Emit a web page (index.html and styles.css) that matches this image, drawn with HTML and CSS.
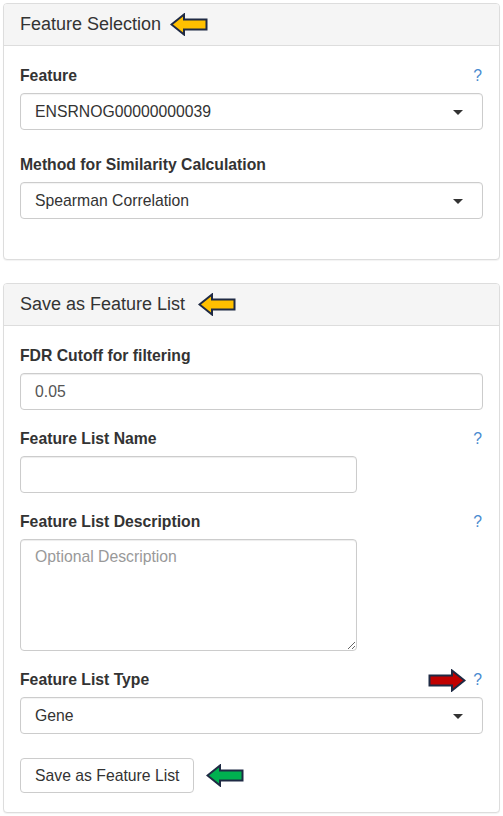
FILE: index.html
```html
<!DOCTYPE html>
<html lang="en">
<head>
<meta charset="utf-8">
<title>Feature Selection</title>
<link rel="stylesheet" href="styles.css">
</head>
<body>
  <section class="panel">
    <div class="panel-heading">
      <span class="panel-title">Feature Selection</span>
      <svg class="arrow arrow-head-1" width="38" height="23" viewBox="0 0 38 23"><polygon points="1.5,11.5 14,1.5 14,6.5 36.5,6.5 36.5,16.5 14,16.5 14,21.5" fill="#ffc000" stroke="#1f2a44" stroke-width="2" stroke-linejoin="miter"/></svg>
    </div>
    <div class="panel-body">
      <div class="form-group form-group-select">
        <div class="label-row">
          <label class="control-label">Feature</label>
          <span class="help">?</span>
        </div>
        <div class="select-box">
          <span class="select-value">ENSRNOG00000000039</span>
          <span class="caret"></span>
        </div>
      </div>
      <div class="form-group form-group-select">
        <div class="label-row">
          <label class="control-label">Method for Similarity Calculation</label>
        </div>
        <div class="select-box">
          <span class="select-value">Spearman Correlation</span>
          <span class="caret"></span>
        </div>
      </div>
    </div>
  </section>

  <section class="panel">
    <div class="panel-heading">
      <span class="panel-title">Save as Feature List</span>
      <svg class="arrow arrow-head-2" width="38" height="23" viewBox="0 0 38 23"><polygon points="1.5,11.5 14,1.5 14,6.5 36.5,6.5 36.5,16.5 14,16.5 14,21.5" fill="#ffc000" stroke="#1f2a44" stroke-width="2" stroke-linejoin="miter"/></svg>
    </div>
    <div class="panel-body">
      <div class="form-group">
        <div class="label-row">
          <label class="control-label">FDR Cutoff for filtering</label>
        </div>
        <input class="form-control" type="text" value="0.05">
      </div>
      <div class="form-group">
        <div class="label-row">
          <label class="control-label">Feature List Name</label>
          <span class="help">?</span>
        </div>
        <input class="form-control form-control-narrow" type="text">
      </div>
      <div class="form-group">
        <div class="label-row">
          <label class="control-label">Feature List Description</label>
          <span class="help">?</span>
        </div>
        <textarea class="form-control form-control-narrow textarea" placeholder="Optional Description"></textarea>
      </div>
      <div class="form-group form-group-select">
        <div class="label-row">
          <label class="control-label">Feature List Type</label>
          <span class="help-wrap">
            <svg class="arrow" width="38" height="23" viewBox="0 0 38 23"><polygon points="36.5,11.5 24,1.5 24,6.5 1.5,6.5 1.5,16.5 24,16.5 24,21.5" fill="#c00000" stroke="#1f2a44" stroke-width="2" stroke-linejoin="miter"/></svg>
            <span class="help">?</span>
          </span>
        </div>
        <div class="select-box">
          <span class="select-value">Gene</span>
          <span class="caret"></span>
        </div>
      </div>
      <div class="button-row">
        <button class="btn" type="button">Save as Feature List</button>
        <svg class="arrow arrow-btn" width="38" height="23" viewBox="0 0 38 23"><polygon points="1.5,11.5 14,1.5 14,6.5 36.5,6.5 36.5,16.5 14,16.5 14,21.5" fill="#00b050" stroke="#1f2a44" stroke-width="2" stroke-linejoin="miter"/></svg>
      </div>
    </div>
  </section>
</body>
</html>
```

FILE: styles.css
```css
* {
  box-sizing: border-box;
}

html, body {
  background: #fff;
}

body {
  margin: 0;
  padding: 3px;
  font-family: "Liberation Sans", Arial, sans-serif;
  font-size: 15.75px;
  color: #333;
}

/* Panels */
.panel {
  border: 1px solid #ddd;
  border-radius: 4px;
  background: #fff;
  box-shadow: 0 1px 1px rgba(0, 0, 0, 0.05);
  margin-bottom: 23px;
}

.panel-heading {
  display: flex;
  align-items: center;
  background: #f5f5f5;
  border-bottom: 1px solid #ddd;
  border-radius: 3px 3px 0 0;
  padding: 10px 16px;
  height: 42px;
}

.panel-title {
  font-size: 18px;
  line-height: 21px;
  color: #333;
}

.arrow {
  display: block;
  flex: none;
}

.arrow-head-1 {
  margin-left: 9px;
}

.arrow-head-2 {
  margin-left: 13px;
}

.panel-body {
  padding: 19px 16px 16px;
}

/* Form groups */
.form-group {
  margin-bottom: 18px;
}

.form-group-select {
  margin-bottom: 24px;
}

.label-row {
  display: flex;
  align-items: center;
  justify-content: space-between;
  height: 22px;
  margin-bottom: 6px;
}

.control-label {
  font-weight: bold;
  font-size: 15.75px;
  line-height: 22px;
}

.help {
  color: #4a8bd0;
  font-size: 15.75px;
  line-height: 22px;
  margin-right: 1px;
}

.help-wrap {
  display: flex;
  align-items: center;
  gap: 7px;
}

/* Select boxes */
.select-box {
  position: relative;
  display: flex;
  align-items: center;
  height: 37px;
  border: 1px solid #ccc;
  border-radius: 4px;
  padding: 0 14px;
  background: #fff;
  box-shadow: inset 0 1px 1px rgba(0, 0, 0, 0.05);
}

.select-value {
  color: #333;
  line-height: 22px;
}

.caret {
  position: absolute;
  right: 19px;
  top: 50%;
  margin-top: -2px;
  width: 0;
  height: 0;
  border-style: solid;
  border-width: 5px 5px 0 5px;
  border-color: #333 transparent transparent transparent;
}

/* Text inputs */
.form-control {
  display: block;
  width: 100%;
  height: 37px;
  border: 1px solid #ccc;
  border-radius: 4px;
  padding: 6px 14px;
  font-family: inherit;
  font-size: 15.75px;
  color: #555;
  background: #fff;
  box-shadow: inset 0 1px 1px rgba(0, 0, 0, 0.075);
  outline: none;
}

.form-control-narrow {
  width: 337px;
}

.textarea {
  height: 112px;
  line-height: 22px;
  padding: 6px 14px;
  resize: vertical;
}

.textarea::placeholder {
  color: #999;
}

/* Button */
.button-row {
  display: flex;
  align-items: center;
  margin-top: 2px;
  margin-bottom: 3px;
}

.btn {
  height: 35px;
  padding: 0 14px;
  white-space: nowrap;
  border: 1px solid #ccc;
  border-radius: 4px;
  background: #fff;
  color: #333;
  font-family: inherit;
  font-size: 15.75px;
}

.arrow-btn {
  margin-left: 12px;
}
```
